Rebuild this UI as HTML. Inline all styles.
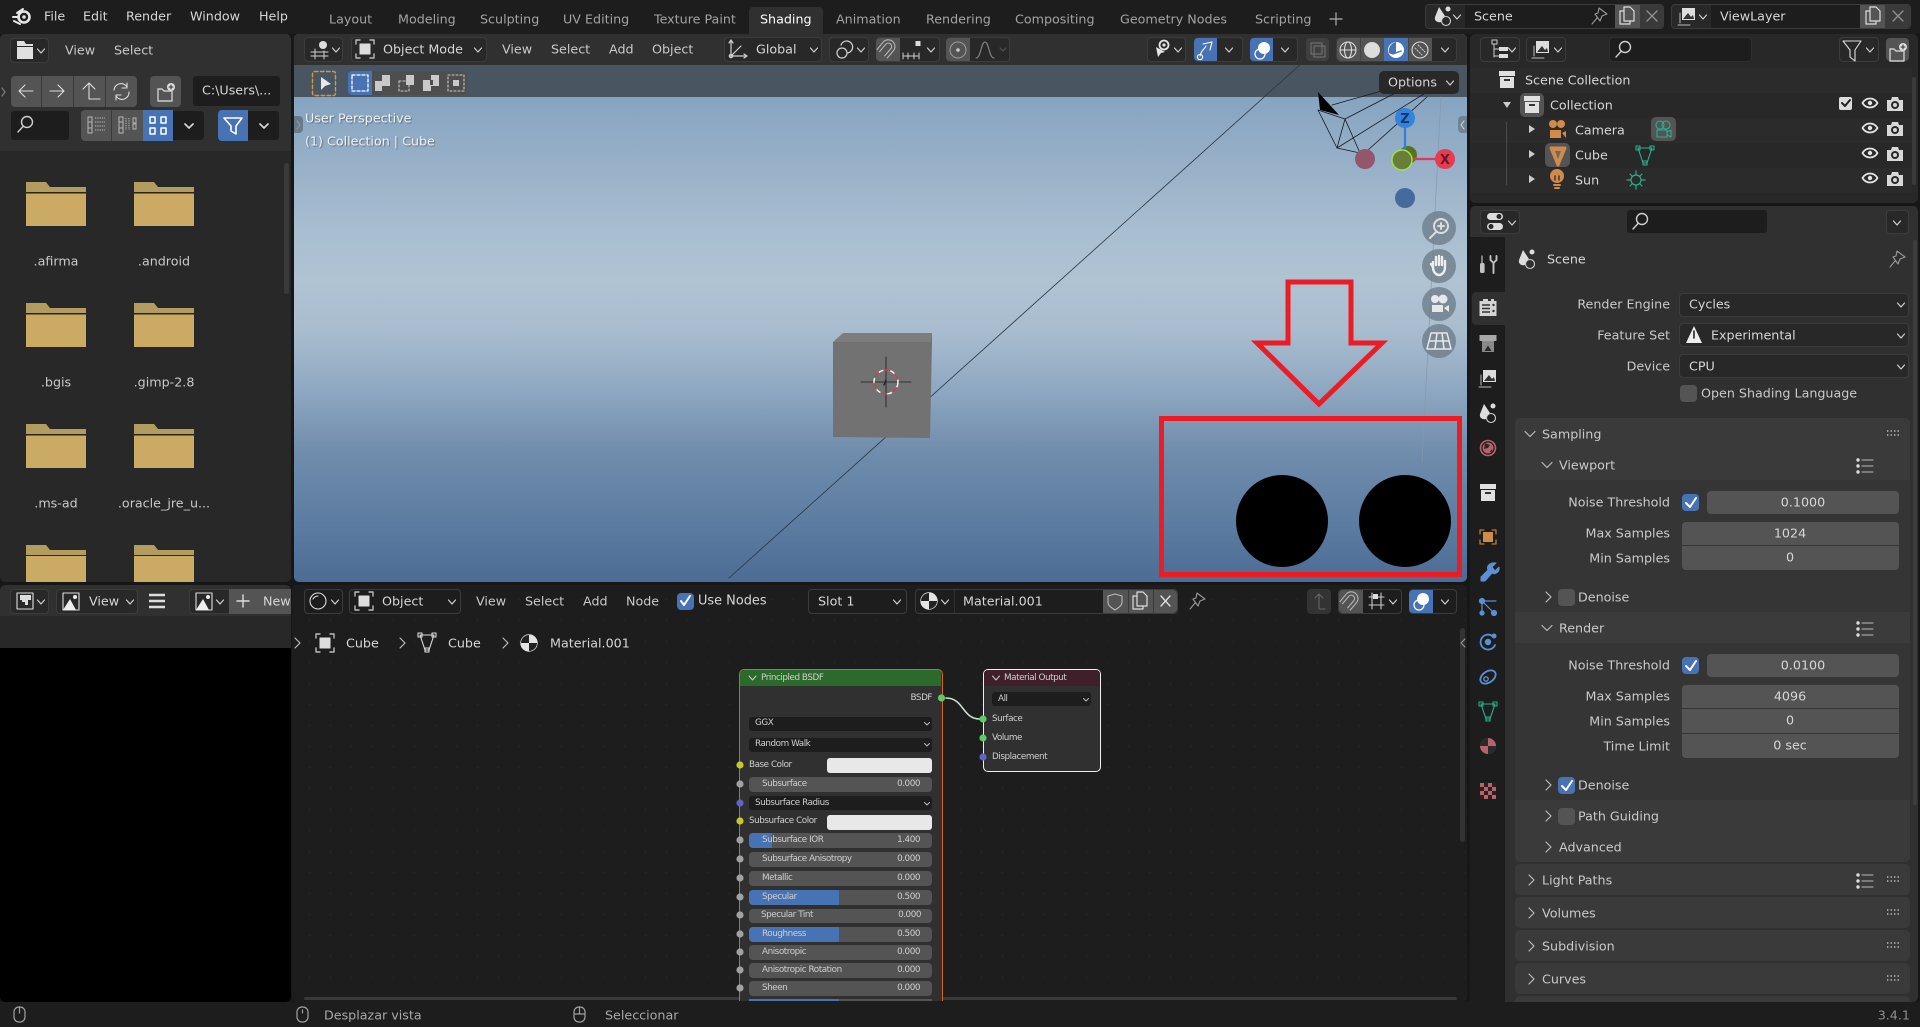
<!DOCTYPE html>
<html><head><meta charset="utf-8"><title>Blender</title>
<style>
html,body{margin:0;padding:0;width:1920px;height:1027px;overflow:hidden;background:#171717}
body{position:relative;font-family:"DejaVu Sans","Liberation Sans",sans-serif;font-size:12.7px;color:#d6d6d6}
div,span{position:absolute;box-sizing:border-box}
.t{transform:translateY(-50%);white-space:nowrap}
.r{transform:translate(-100%,-50%);white-space:nowrap}
.c{transform:translate(-50%,-50%);white-space:nowrap}
.p{border-radius:5px}
.d{background:#282828;border:1px solid #3c3c3c;border-radius:4px}
.k{background:#1d1d1d;border:1px solid #303030;border-radius:4px}
.f{background:#545454;border-radius:4px}
.b{background:#4772b3;border-radius:4px}
.n{font-size:8.8px;letter-spacing:-.45px;color:#cfcfcf}
.m{color:#a3a3a3}
.l{color:#c9c9c9}
svg.o{position:absolute;left:0;top:0;width:1920px;height:1027px;pointer-events:none}
</style></head><body>

<!-- panels -->
<div style="left:0;top:0;width:1920px;height:34px;background:#1d1d1d"></div>
<div style="left:749px;top:7px;width:74px;height:27px;background:#303030;border-radius:4px 4px 0 0"></div>
<div class="p" style="left:0;top:34px;width:291px;height:548px;background:#282828"></div>
<div class="p" style="left:0;top:34px;width:291px;height:117px;background:#303030;border-radius:5px 5px 0 0"></div>
<div style="left:284px;top:163px;width:5px;height:131px;background:#3a3a3a;border-radius:3px"></div>

<div class="p" style="left:294px;top:34px;width:1173px;height:548px;overflow:hidden;background:linear-gradient(180deg,#86a4c0 63px,#95aec7 120px,#a9bed0 200px,#afc3d3 245px,#a9bdcf 295px,#8fa8c2 355px,#6f8cac 420px,#5c7ca1 490px,#4d6c95 548px)">
<div style="left:0;top:0;width:1173px;height:31px;background:#303030"></div>
<div style="left:0;top:31px;width:1173px;height:32px;background:#4a5562"></div>
</div>

<div class="p" style="left:1470px;top:34px;width:448px;height:169px;background:#282828"></div>
<div style="left:1470px;top:68px;width:442px;height:25px;background:#2b2b2b"></div>
<div style="left:1470px;top:118px;width:442px;height:25px;background:#2b2b2b"></div>
<div style="left:1470px;top:168px;width:442px;height:25px;background:#2b2b2b"></div>
<div style="left:1912px;top:77px;width:4px;height:108px;background:#3a3a3a;border-radius:2px"></div>

<div class="p" style="left:1470px;top:206px;width:448px;height:796px;background:#303030"></div>
<div style="left:1470px;top:237px;width:35px;height:765px;background:#1d1d1d"></div>
<div style="left:1472px;top:292px;width:33px;height:33px;background:#303030;border-radius:4px 0 0 4px"></div>
<div style="left:1913px;top:240px;width:4px;height:565px;background:#3d3d3d;border-radius:2px"></div>

<div class="p" style="left:0;top:585px;width:291px;height:417px;background:#000;overflow:hidden">
<div style="left:0;top:0;width:291px;height:31px;background:#303030"></div>
<div style="left:0;top:31px;width:291px;height:32px;background:#282828"></div>
</div>

<div class="p" style="left:292px;top:585px;width:1175px;height:417px;background-color:#1d1d1d;background-image:radial-gradient(circle,#242424 1px,transparent 1.3px);background-size:21px 21px;background-position:7px 4px"></div>
<div style="left:1460px;top:628px;width:5px;height:214px;background:#333;border-radius:3px"></div>
<div style="left:304px;top:997px;width:1153px;height:3px;background:#3a3a3a;border-radius:2px"></div>

<div style="left:0;top:1002px;width:1920px;height:25px;background:#1d1d1d"></div>

<!-- top bar -->
<span class="t" style="left:44px;top:16px">File</span>
<span class="t" style="left:83px;top:16px">Edit</span>
<span class="t" style="left:126px;top:16px">Render</span>
<span class="t" style="left:190px;top:16px">Window</span>
<span class="t" style="left:259px;top:16px">Help</span>
<span class="t m" style="left:329px;top:19px">Layout</span>
<span class="t m" style="left:398px;top:19px">Modeling</span>
<span class="t m" style="left:480px;top:19px">Sculpting</span>
<span class="t m" style="left:563px;top:19px">UV Editing</span>
<span class="t m" style="left:654px;top:19px">Texture Paint</span>
<span class="t" style="left:760px;top:19px;color:#fff">Shading</span>
<span class="t m" style="left:836px;top:19px">Animation</span>
<span class="t m" style="left:926px;top:19px">Rendering</span>
<span class="t m" style="left:1015px;top:19px">Compositing</span>
<span class="t m" style="left:1120px;top:19px">Geometry Nodes</span>
<span class="t m" style="left:1255px;top:19px">Scripting</span>

<div class="d" style="left:1425px;top:4px;width:239px;height:25px"></div>
<div style="left:1465px;top:5px;width:150px;height:23px;background:#1d1d1d"></div>
<div style="left:1615px;top:5px;width:25px;height:23px;background:#545454"></div>
<div style="left:1640px;top:5px;width:23px;height:23px;background:#3a3a3a;border-radius:0 4px 4px 0"></div>
<span class="t" style="left:1474px;top:16px">Scene</span>
<div class="d" style="left:1671px;top:4px;width:240px;height:25px"></div>
<div style="left:1711px;top:5px;width:149px;height:23px;background:#1d1d1d"></div>
<div style="left:1860px;top:5px;width:25px;height:23px;background:#545454"></div>
<div style="left:1885px;top:5px;width:25px;height:23px;background:#3a3a3a;border-radius:0 4px 4px 0"></div>
<span class="t" style="left:1720px;top:16px">ViewLayer</span>

<!-- file browser -->
<div class="d" style="left:10px;top:38px;width:39px;height:25px"></div>
<span class="t l" style="left:65px;top:50px">View</span>
<span class="t l" style="left:114px;top:50px">Select</span>
<div class="f" style="left:11px;top:76px;width:126px;height:31px"></div>
<div style="left:41px;top:76px;width:1px;height:31px;background:#3a3a3a"></div>
<div style="left:73px;top:76px;width:1px;height:31px;background:#3a3a3a"></div>
<div style="left:105px;top:76px;width:1px;height:31px;background:#3a3a3a"></div>
<div class="f" style="left:150px;top:76px;width:31px;height:31px"></div>
<div class="k" style="left:192px;top:75px;width:89px;height:32px"></div>
<span class="t" style="left:202px;top:90px">C:\Users\...</span>
<div class="k" style="left:10px;top:110px;width:60px;height:31px"></div>
<div class="k" style="left:81px;top:110px;width:124px;height:31px"></div>
<div class="f" style="left:81px;top:110px;width:62px;height:31px;border-radius:4px 0 0 4px"></div>
<div style="left:111px;top:110px;width:1px;height:31px;background:#3a3a3a"></div>
<div class="b" style="left:143px;top:110px;width:30px;height:31px;border-radius:0"></div>
<div class="k" style="left:218px;top:110px;width:62px;height:31px"></div>
<div class="b" style="left:218px;top:110px;width:30px;height:31px;border-radius:4px 0 0 4px"></div>
<span class="c l" style="left:56px;top:261px">.afirma</span>
<span class="c l" style="left:164px;top:261px">.android</span>
<span class="c l" style="left:56px;top:382px">.bgis</span>
<span class="c l" style="left:164px;top:382px">.gimp-2.8</span>
<span class="c l" style="left:56px;top:503px">.ms-ad</span>
<span class="c l" style="left:164px;top:503px">.oracle_jre_u...</span>

<!-- 3d header -->
<div class="d" style="left:304px;top:37px;width:39px;height:25px"></div>
<div class="d" style="left:351px;top:37px;width:136px;height:25px"></div>
<span class="t" style="left:383px;top:49px">Object Mode</span>
<span class="t l" style="left:502px;top:49px">View</span>
<span class="t l" style="left:551px;top:49px">Select</span>
<span class="t l" style="left:609px;top:49px">Add</span>
<span class="t l" style="left:652px;top:49px">Object</span>
<div class="d" style="left:724px;top:37px;width:98px;height:25px"></div>
<span class="t" style="left:756px;top:49px">Global</span>
<div class="d" style="left:829px;top:37px;width:40px;height:25px"></div>
<div class="d" style="left:876px;top:37px;width:64px;height:25px"></div>
<div class="f" style="left:876px;top:38px;width:24px;height:23px;border-radius:4px 0 0 4px"></div>
<div class="d" style="left:946px;top:37px;width:64px;height:25px"></div>
<div class="f" style="left:946px;top:38px;width:24px;height:23px;border-radius:4px 0 0 4px"></div>
<div class="d" style="left:1147px;top:37px;width:39px;height:25px"></div>
<div class="d" style="left:1194px;top:37px;width:49px;height:25px"></div>
<div class="b" style="left:1194px;top:38px;width:23px;height:23px;border-radius:4px 0 0 4px"></div>
<div class="d" style="left:1250px;top:37px;width:48px;height:25px"></div>
<div class="b" style="left:1250px;top:38px;width:23px;height:23px;border-radius:4px 0 0 4px"></div>
<div class="f" style="left:1306px;top:38px;width:23px;height:23px;background:#3f3f3f"></div>
<div class="d" style="left:1336px;top:37px;width:121px;height:25px"></div>
<div class="f" style="left:1337px;top:38px;width:95px;height:23px;border-radius:4px 0 0 4px"></div>
<div class="b" style="left:1384px;top:38px;width:24px;height:23px;border-radius:0"></div>
<div style="left:1360px;top:38px;width:1px;height:23px;background:#454545"></div>
<div style="left:1408px;top:38px;width:1px;height:23px;background:#454545"></div>

<!-- tool header -->
<div class="f" style="left:348px;top:71px;width:119px;height:24px;background:#4e4e4e"></div>
<div class="b" style="left:348px;top:71px;width:24px;height:24px;border-radius:4px 0 0 4px"></div>
<span class="t" style="left:305px;top:118px;color:#f0f0f0;text-shadow:1px 1px 1px rgba(0,0,0,.35)">User Perspective</span>
<span class="t" style="left:305px;top:141px;color:#f0f0f0;text-shadow:1px 1px 1px rgba(0,0,0,.35)">(1) Collection | Cube</span>
<div style="left:294px;top:116px;width:9px;height:17px;background:rgba(80,90,100,.6);border-radius:0 4px 4px 0"></div>
<div style="left:1458px;top:116px;width:9px;height:17px;background:rgba(100,115,130,.7);border-radius:4px 0 0 4px"></div>

<!-- image editor -->
<div class="d" style="left:10px;top:589px;width:39px;height:25px"></div>
<div class="d" style="left:56px;top:589px;width:82px;height:25px"></div>
<span class="t" style="left:89px;top:601px">View</span>
<div class="d" style="left:189px;top:589px;width:102px;height:25px;border-radius:4px 0 0 4px"></div>
<div style="left:229px;top:589px;width:62px;height:25px;background:#545454"></div>
<span class="t" style="left:263px;top:601px">New</span>

<!-- node header -->
<div class="d" style="left:304px;top:589px;width:39px;height:25px;background:#1d1d1d"></div>
<div class="d" style="left:349px;top:589px;width:112px;height:25px;background:#1d1d1d"></div>
<span class="t" style="left:382px;top:601px">Object</span>
<span class="t l" style="left:476px;top:601px">View</span>
<span class="t l" style="left:525px;top:601px">Select</span>
<span class="t l" style="left:583px;top:601px">Add</span>
<span class="t l" style="left:626px;top:601px">Node</span>
<div class="b" style="left:677px;top:593px;width:17px;height:17px"></div>
<span class="t" style="left:698px;top:601px;font-size:12.9px">Use Nodes</span>
<div class="d" style="left:808px;top:589px;width:99px;height:25px;background:#1d1d1d"></div>
<span class="t" style="left:818px;top:601px">Slot 1</span>
<div class="d" style="left:915px;top:589px;width:263px;height:25px;background:#1d1d1d"></div>
<div style="left:954px;top:590px;width:1px;height:23px;background:#303030"></div>
<span class="t" style="left:963px;top:601px">Material.001</span>
<div style="left:1103px;top:590px;width:74px;height:23px;background:#545454;border-radius:0 4px 4px 0"></div>
<div style="left:1128px;top:590px;width:1px;height:23px;background:#3a3a3a"></div>
<div style="left:1153px;top:590px;width:1px;height:23px;background:#3a3a3a"></div>
<div class="f" style="left:1307px;top:589px;width:24px;height:25px;background:#333"></div>
<div class="d" style="left:1338px;top:589px;width:64px;height:25px;background:#1d1d1d"></div>
<div class="f" style="left:1339px;top:590px;width:24px;height:23px;border-radius:4px 0 0 4px"></div>
<div class="d" style="left:1409px;top:589px;width:48px;height:25px;background:#1d1d1d"></div>
<div class="b" style="left:1409px;top:590px;width:24px;height:23px;border-radius:4px 0 0 4px"></div>
<span class="t" style="left:346px;top:643px">Cube</span>
<span class="t" style="left:448px;top:643px">Cube</span>
<span class="t" style="left:550px;top:643px">Material.001</span>

<!-- Principled node -->
<div style="left:739px;top:669px;width:204px;height:332px;background:#303030;border:1.5px solid #d2661f;border-bottom:0;border-radius:5px 5px 0 0;overflow:hidden">
<div style="left:0;top:0;width:201px;height:16px;background:#2c6a2c"></div>
</div>
<span class="t n" style="left:761px;top:678px">Principled BSDF</span>
<span class="r n" style="left:932px;top:698px">BSDF</span>
<div class="k" style="left:748px;top:716px;width:185px;height:16px"></div><span class="t n" style="left:755px;top:723px">GGX</span>
<div class="k" style="left:748px;top:737px;width:185px;height:16px"></div><span class="t n" style="left:755px;top:744px">Random Walk</span>
<span class="t n" style="left:749px;top:765px">Base Color</span>
<div style="left:827px;top:758px;width:105px;height:15px;background:#e8e8e8;border-radius:3px"></div>
<div class="f" style="left:749px;top:777px;width:183px;height:15px"></div><span class="t n" style="left:762px;top:784px">Subsurface</span><span class="r n" style="left:920px;top:784px">0.000</span>
<div class="k" style="left:748px;top:795px;width:185px;height:16px"></div><span class="t n" style="left:755px;top:803px">Subsurface Radius</span>
<span class="t n" style="left:749px;top:821px">Subsurface Color</span>
<div style="left:827px;top:815px;width:105px;height:15px;background:#e8e8e8;border-radius:3px"></div>
<div class="f" style="left:749px;top:833px;width:183px;height:15px"></div><div class="b" style="left:749px;top:833px;width:23px;height:15px;border-radius:4px 0 0 4px"></div><span class="t n" style="left:762px;top:840px">Subsurface IOR</span><span class="r n" style="left:920px;top:840px">1.400</span>
<div class="f" style="left:749px;top:852px;width:183px;height:15px"></div><span class="t n" style="left:762px;top:859px">Subsurface Anisotropy</span><span class="r n" style="left:920px;top:859px">0.000</span>
<div class="f" style="left:749px;top:871px;width:183px;height:15px"></div><span class="t n" style="left:762px;top:878px">Metallic</span><span class="r n" style="left:920px;top:878px">0.000</span>
<div class="f" style="left:749px;top:890px;width:183px;height:15px"></div><div class="b" style="left:749px;top:890px;width:90px;height:15px;border-radius:4px 0 0 4px"></div><span class="t n" style="left:762px;top:897px">Specular</span><span class="r n" style="left:920px;top:897px">0.500</span>
<div class="f" style="left:749px;top:909px;width:183px;height:14px"></div><span class="t n" style="left:761px;top:915px">Specular Tint</span><span class="r n" style="left:921px;top:915px">0.000</span>
<div class="f" style="left:749px;top:927px;width:183px;height:15px"></div><div class="b" style="left:749px;top:927px;width:90px;height:15px;border-radius:4px 0 0 4px"></div><span class="t n" style="left:762px;top:934px">Roughness</span><span class="r n" style="left:920px;top:934px">0.500</span>
<div class="f" style="left:749px;top:945px;width:183px;height:15px"></div><span class="t n" style="left:762px;top:952px">Anisotropic</span><span class="r n" style="left:920px;top:952px">0.000</span>
<div class="f" style="left:749px;top:963px;width:183px;height:15px"></div><span class="t n" style="left:762px;top:970px">Anisotropic Rotation</span><span class="r n" style="left:920px;top:970px">0.000</span>
<div class="f" style="left:749px;top:981px;width:183px;height:15px"></div><span class="t n" style="left:762px;top:988px">Sheen</span><span class="r n" style="left:920px;top:988px">0.000</span>
<div class="f" style="left:749px;top:999px;width:183px;height:2px;border-radius:0"></div><div class="b" style="left:749px;top:999px;width:90px;height:2px;border-radius:0"></div>

<!-- Material output -->
<div style="left:983px;top:669px;width:118px;height:103px;background:#303030;border:1.5px solid #eee;border-radius:5px;overflow:hidden">
<div style="left:0;top:0;width:116px;height:16px;background:#3f1f2a"></div>
</div>
<span class="t n" style="left:1004px;top:678px">Material Output</span>
<div class="k" style="left:991px;top:691px;width:101px;height:16px"></div><span class="t n" style="left:998px;top:699px">All</span>
<span class="t n" style="left:992px;top:719px">Surface</span>
<span class="t n" style="left:992px;top:738px">Volume</span>
<span class="t n" style="left:992px;top:757px">Displacement</span>

<!-- outliner -->
<div class="d" style="left:1480px;top:37px;width:40px;height:25px;background:#282828"></div>
<div class="d" style="left:1526px;top:37px;width:40px;height:25px;background:#282828"></div>
<div class="k" style="left:1609px;top:37px;width:143px;height:25px"></div>
<div class="d" style="left:1839px;top:37px;width:40px;height:25px;background:#282828"></div>
<div class="f" style="left:1886px;top:38px;width:23px;height:23px"></div>
<span class="t" style="left:1525px;top:80px">Scene Collection</span>
<div style="left:1520px;top:93px;width:24px;height:24px;background:#545454;border-radius:5px"></div>
<span class="t" style="left:1550px;top:105px">Collection</span>
<span class="t" style="left:1575px;top:130px">Camera</span>
<div style="left:1651px;top:117px;width:25px;height:24px;background:#545454;border-radius:5px"></div>
<div style="left:1545px;top:143px;width:25px;height:24px;background:#545454;border-radius:5px"></div>
<span class="t" style="left:1575px;top:155px">Cube</span>
<span class="t" style="left:1575px;top:180px">Sun</span>
<div style="left:1506px;top:122px;width:1px;height:63px;background:#4a4a4a"></div>

<!-- props header -->
<div class="d" style="left:1480px;top:210px;width:40px;height:24px"></div>
<div class="k" style="left:1626px;top:209px;width:142px;height:25px"></div>
<div class="d" style="left:1886px;top:210px;width:23px;height:24px"></div>
<span class="t" style="left:1547px;top:259px">Scene</span>
<span class="r l" style="left:1670px;top:304px">Render Engine</span>
<div class="d" style="left:1679px;top:293px;width:230px;height:24px"></div><span class="t" style="left:1689px;top:304px">Cycles</span>
<span class="r l" style="left:1670px;top:335px">Feature Set</span>
<div class="d" style="left:1679px;top:323px;width:230px;height:24px"></div><span class="t" style="left:1711px;top:335px">Experimental</span>
<span class="r l" style="left:1670px;top:366px">Device</span>
<div class="d" style="left:1679px;top:354px;width:230px;height:24px"></div><span class="t" style="left:1689px;top:366px">CPU</span>
<div class="f" style="left:1680px;top:385px;width:17px;height:17px"></div><span class="t l" style="left:1701px;top:393px">Open Shading Language</span>

<!-- sampling panel -->
<div class="p" style="left:1515px;top:418px;width:395px;height:444px;background:#3a3a3a"></div>
<div style="left:1515px;top:480px;width:395px;height:132px;background:#353535"></div>
<div style="left:1515px;top:612px;width:395px;height:31px;background:#3b3b3b"></div>
<div style="left:1515px;top:643px;width:395px;height:157px;background:#353535"></div>
<span class="t l" style="left:1542px;top:434px">Sampling</span>
<span class="t l" style="left:1559px;top:465px">Viewport</span>
<span class="r l" style="left:1670px;top:502px">Noise Threshold</span>
<div class="b" style="left:1682px;top:494px;width:17px;height:17px"></div>
<div class="f" style="left:1707px;top:491px;width:192px;height:23px"></div><span class="c" style="left:1803px;top:502px">0.1000</span>
<span class="r l" style="left:1670px;top:533px">Max Samples</span>
<div class="f" style="left:1682px;top:522px;width:217px;height:23px;border-radius:4px 4px 0 0"></div><span class="c" style="left:1790px;top:533px">1024</span>
<span class="r l" style="left:1670px;top:558px">Min Samples</span>
<div class="f" style="left:1682px;top:546px;width:217px;height:24px;border-radius:0 0 4px 4px"></div><span class="c" style="left:1790px;top:557px">0</span>
<div class="f" style="left:1558px;top:589px;width:17px;height:17px"></div><span class="t l" style="left:1578px;top:597px">Denoise</span>
<span class="t l" style="left:1559px;top:628px">Render</span>
<span class="r l" style="left:1670px;top:665px">Noise Threshold</span>
<div class="b" style="left:1682px;top:657px;width:17px;height:17px"></div>
<div class="f" style="left:1707px;top:654px;width:192px;height:23px"></div><span class="c" style="left:1803px;top:665px">0.0100</span>
<span class="r l" style="left:1670px;top:696px">Max Samples</span>
<div class="f" style="left:1682px;top:685px;width:217px;height:23px;border-radius:4px 4px 0 0"></div><span class="c" style="left:1790px;top:696px">4096</span>
<span class="r l" style="left:1670px;top:721px">Min Samples</span>
<div class="f" style="left:1682px;top:709px;width:217px;height:24px;border-radius:0"></div><span class="c" style="left:1790px;top:720px">0</span>
<span class="r l" style="left:1670px;top:746px">Time Limit</span>
<div class="f" style="left:1682px;top:734px;width:217px;height:24px;border-radius:0 0 4px 4px"></div><span class="c" style="left:1790px;top:745px">0 sec</span>
<div class="b" style="left:1558px;top:777px;width:17px;height:17px"></div><span class="t l" style="left:1578px;top:785px">Denoise</span>
<div class="f" style="left:1558px;top:808px;width:17px;height:17px"></div><span class="t l" style="left:1578px;top:816px">Path Guiding</span>
<span class="t l" style="left:1559px;top:847px">Advanced</span>
<div class="p" style="left:1515px;top:864px;width:395px;height:31px;background:#3a3a3a"></div><span class="t l" style="left:1542px;top:880px">Light Paths</span>
<div class="p" style="left:1515px;top:897px;width:395px;height:31px;background:#3a3a3a"></div><span class="t l" style="left:1542px;top:913px">Volumes</span>
<div class="p" style="left:1515px;top:930px;width:395px;height:31px;background:#3a3a3a"></div><span class="t l" style="left:1542px;top:946px">Subdivision</span>
<div class="p" style="left:1515px;top:963px;width:395px;height:31px;background:#3a3a3a"></div><span class="t l" style="left:1542px;top:979px">Curves</span>
<div style="left:1515px;top:996px;width:395px;height:6px;background:#3a3a3a;border-radius:5px 5px 0 0"></div>

<!-- status -->
<span class="t" style="left:324px;top:1015px;color:#a8a8a8">Desplazar vista</span>
<span class="t" style="left:605px;top:1015px;color:#a8a8a8">Seleccionar</span>
<span class="r" style="left:1910px;top:1015px;color:#8f8f8f">3.4.1</span>

<svg class="o" viewBox="0 0 1920 1027" fill="none" stroke="#d0d0d0" stroke-width="1.4" stroke-linecap="round" stroke-linejoin="round">
<defs>
<path id="c" d="M-3.5-2L0 2L3.5-2" stroke-width="1.2"/>
<path id="c2" d="M-2.5-1.5L0 1L2.5-1.5" stroke-width="1" stroke="#bbb"/>
<path id="cr" d="M-2-5L3 0L-2 5" stroke="#bbb" stroke-width="1.2"/>
<path id="cd" d="M-5-2.5L0 2.5L5-2.5" stroke="#bbb" stroke-width="1.2"/>
<path id="gr" d="M-7-2H7M-7 2H7" stroke="#bbb" stroke-width="1.5" stroke-dasharray="1.4 2.1" stroke-linecap="butt"/>
<g id="li"><circle cx="-7" cy="-6" r="1.7" fill="#ddd" stroke="none"/><circle cx="-7" cy="0" r="1.7" fill="#ddd" stroke="none"/><circle cx="-7" cy="6" r="1.7" fill="#ddd" stroke="none"/><path d="M-3-6H8M-3 0H8M-3 6H8" stroke="#bbb" stroke-width="1"/></g>
<g id="se"><circle cx="2" cy="-3" r="5.5"/><path d="M-2 1.5L-7 7"/></g>
<g id="eye"><path d="M-7.5 0C-4-6 4-6 7.5 0C4 6-4 6-7.5 0Z" stroke-width="1.8" stroke="#e4e4e4"/><circle r="2.2" fill="#e4e4e4" stroke="none"/></g>
<g id="cam"><path d="M-8-4H-4L-3-7H3L4-4H8V7H-8Z" fill="#d8d8d8" stroke="none"/><circle cy="1" r="4" fill="#282828" stroke="none"/><circle cy="1" r="2" fill="#d8d8d8" stroke="none"/></g>
<g id="mo"><path d="M-9-5V-9H-5M5-9H9V-5M9 5V9H5M-5 9H-9V5" stroke="#bbb"/><rect x="-5.5" y="-5.5" width="11" height="11" fill="#ddd" stroke="none"/></g>
<g id="ed3"><circle cx="3" cy="-4" r="4" fill="#ddd" stroke="none"/><path d="M-9 3H8M-9 7H8M-5 0V10M4 2V10" stroke-width="1"/></g>
<g id="gl"><path d="M-7-9V7H9M-7 7L3-3M-9-6L-7-9L-5-6M6 5L9 7L6 9" stroke-width="1.2"/><circle cx="-7" cy="7" r="1.6"/></g>
<g id="pv"><circle cx="-3" cy="4" r="5" stroke-width="1.2"/><path d="M-4-4A6 6 0 1 1 2 4" stroke-width="1.2"/></g>
<g id="mg" transform="rotate(0)"><g transform="rotate(40)"><path d="M-5 8V-2A5 5 0 0 1 5-2V8" stroke="#b5b5b5" stroke-width="4.4" stroke-linecap="butt"/><path d="M-5 8V-2A5 5 0 0 1 5-2V8" stroke="#545454" stroke-width="2.2" stroke-linecap="butt"/></g></g>
<g id="inc"><path d="M-8 6H8M-8 3V9M-3 3V9M3 3V9M8 3V9" stroke-width="1"/><rect x="4.5" y="-9" width="5" height="5" fill="#ddd" stroke="none"/></g>
<g id="fo"><path d="M0 0H20L24 5H60V10H0Z" fill="#b39c5f" stroke="none"/><path d="M0 10H60V11.5H0Z" fill="#2a2416" stroke="none"/><path d="M0 11.5H60V44H0Z" fill="#cbaa63" stroke="none"/></g>
<g id="fed"><path d="M-8-9H-1L1-6H8V-4H-8ZM-8-3H8V9H-8Z" fill="#e0e0e0" stroke="none"/></g>
<g id="nf"><path d="M-7-3H-3L-1-1H7V9H-7Z" stroke="#ccc"/><circle cx="6" cy="-5" r="4" fill="#ddd" stroke="none"/><path d="M4-5H8M6-7V-3" stroke="#333" stroke-width="1.1"/></g>
<g id="vl"><path d="M-7 7V-3M-9 9H3" stroke="#bbb" stroke-width="1"/><path d="M-5-8H8V4H-5Z" fill="#ddd" stroke="none"/><path d="M-4 3L1-3L4 1L6-1L7 3Z" fill="#333" stroke="none"/></g>
<g id="sc"><path d="M-4-9L-8 1C-9 5-5 7-2 6C-2 3 0 1 2 0Z" fill="#ddd" stroke="none"/><circle cx="5" cy="-7" r="2.5" fill="#ddd" stroke="none"/><circle cx="3" cy="5" r="4.5" stroke-width="1.1"/></g>
<g id="pin"><path d="M-1-8L7-2L2 0L0 5L-5-2L-2-3Z M-3 2L-8 8" stroke="#999" stroke-width="1.1"/></g>
<g id="cp"><path d="M-7-5H-3M-7-5V8H3V5" stroke="#ddd" stroke-width="1.2"/><path d="M-3-9H3L7-5V5H-3Z" stroke="#ddd" stroke-width="1.2"/></g>
<g id="x"><path d="M-5-5L5 5M5-5L-5 5" stroke="#8f8f8f"/></g>
<g id="box"><rect x="-8" y="-9" width="16" height="5" fill="#e0e0e0" stroke="none"/><path d="M-7-3H7V8H-7Z" fill="#e0e0e0" stroke="none"/><rect x="-3" y="-1" width="6" height="2" fill="#333" stroke="none"/></g>
<g id="mat"><circle r="8" fill="#e4e4e4" stroke="#e4e4e4"/><path d="M0-8A8 8 0 0 0-8 0H0ZM0 0V8A8 8 0 0 0 8 0Z" fill="#222" stroke="none"/></g>
<g id="mesh"><path d="M-7-7H7L2 8H-2Z" stroke="#ddd" stroke-width="1.1"/><rect x="-9" y="-9" width="4" height="4" stroke="#ddd" stroke-width="1.1"/><rect x="5" y="-9" width="4" height="4" stroke="#ddd" stroke-width="1.1"/><rect x="-2" y="6" width="4" height="4" stroke="#ddd" stroke-width="1.1"/></g>
<g id="meshg"><path d="M-7-7H7L2 8H-2Z" stroke="#2bb08c" stroke-width="1.1"/><rect x="-9" y="-9" width="4" height="4" stroke="#2bb08c" stroke-width="1.1"/><rect x="5" y="-9" width="4" height="4" stroke="#2bb08c" stroke-width="1.1"/><rect x="-2" y="6" width="4" height="4" stroke="#2bb08c" stroke-width="1.1"/></g>
<g id="mcam"><circle cx="-3" cy="-5" r="4" /><circle cx="3" cy="-5" r="4"/><path d="M-6 0H4V7H-6ZM4 2L8 0V7L4 5"/></g>
<g id="hand"><path d="M-6 2V-3M-3 0V-8M0 0V-9M3 0V-8M6 2V-4M-6 2L-8-1M-6 2C-6 8-2 10 0 10S6 8 6 2" stroke="#eee" stroke-width="2.4"/></g>
</defs>

<!-- logo -->
<g transform="translate(22,17)"><circle cx="2" cy="0" r="5.5" stroke="#e6e6e6" stroke-width="2.6"/><circle cx="2" cy="0" r="1.8" fill="#e6e6e6" stroke="none"/><path d="M-9 0H-3M-5-4L1-8M-8 4L-2 7" stroke="#e6e6e6" stroke-width="2"/></g>

<!-- tab + -->
<path d="M1330 19H1342M1336 13V25" stroke="#999"/>

<!-- scene selector -->
<use href="#sc" x="1443" y="16"/><use href="#c" x="1457" y="17"/>
<use href="#pin" x="1600" y="16"/><use href="#cp" x="1627" y="16"/><use href="#x" x="1652" y="16"/>
<use href="#vl" x="1687" y="16"/><use href="#c" x="1703" y="17"/>
<use href="#cp" x="1873" y="16"/><use href="#x" x="1898" y="16"/>

<!-- file browser icons -->
<use href="#fed" x="25" y="50"/><use href="#c" x="41" y="51"/>
<path d="M19 91H33M19 91L25 85M19 91L25 97M50 91H64M64 91L58 85M64 91L58 97M89 83V99H100M89 83L83 89M89 83L95 89" stroke="#ddd" stroke-width="1.1"/>
<path d="M114 90A7 7 0 0 1 127 87M129 92A7 7 0 0 1 116 96M127 83V88H122M116 100V95H121" stroke="#ddd" stroke-width="1.1"/>
<use href="#nf" x="165" y="92"/>
<use href="#se" x="25" y="125"/>
<g stroke="#a8a8a8" stroke-width="1.2" stroke-linecap="butt"><path d="M88 117H92V133H88ZM88 122H92M88 128H92"/><path d="M95 118H105M95 122H105M95 126H105M95 130H105" stroke-dasharray="1.3 1"/>
<path d="M119 117H123V133H119ZM119 122H123M119 128H123"/><path d="M126 118V130M129 118V130" stroke-dasharray="1.3 1"/><path d="M133 118H136V123H133ZM133 124H136V129H133Z"/></g>
<path d="M150 117H155V123H150ZM161 117H166V123H161ZM150 128H155V134H150ZM161 128H166V134H161Z" stroke="#fff" stroke-width="1.5"/>
<path d="M185 124L189 128L193 124" stroke="#ddd" stroke-width="1.6"/>
<path d="M224 118H242L236 126V134L231 131V126Z" stroke="#fff" stroke-width="1.6"/>
<path d="M260 124L264 128L268 124" stroke="#ddd" stroke-width="1.6"/>
<path d="M2 88L5 92L2 96" stroke="#777"/>
<use href="#fo" x="26" y="182"/><use href="#fo" x="134" y="182"/>
<use href="#fo" x="26" y="303"/><use href="#fo" x="134" y="303"/>
<use href="#fo" x="26" y="424"/><use href="#fo" x="134" y="424"/>
<g><path d="M26 545H46L50 550H86V555H26Z" fill="#b39c5f" stroke="none"/><path d="M26 556H86V582H26Z" fill="#cbaa63" stroke="none"/><path d="M134 545H154L158 550H194V555H134Z" fill="#b39c5f" stroke="none"/><path d="M134 556H194V582H134Z" fill="#cbaa63" stroke="none"/></g>

<!-- viewport 3D content -->
<path d="M1302 63L729 578" stroke="#2a3644" stroke-width=".8"/>
<path d="M1441 97L1422 462" stroke="#8299af" stroke-width=".7"/>
<path d="M833 342L843 333H932L930 342Z" fill="#7d7d7d" stroke="none"/>
<path d="M833 342H930L932 333V342L930 438L833 437Z" fill="#727272" stroke="none"/>
<path d="M886 357V407M861 382H911" stroke="#333" stroke-width="1.1"/>
<circle cx="886" cy="382" r="12" stroke="#fff" stroke-width="1.4" stroke-dasharray="6 6"/>
<circle cx="886" cy="382" r="12" stroke="#b9475a" stroke-width="1.4" stroke-dasharray="6 6" stroke-dashoffset="6"/>
<path d="M886 380L884 385" stroke="#222"/>
<!-- camera -->
<g stroke="#161a20" stroke-width=".8" fill="none"><path d="M1318 110L1345 119L1337 148L1318 110ZM1345 119L1360 153L1337 148M1345 119L1405 88M1337 148L1427 92M1368 150L1427 97M1332 105L1385 90"/></g>
<path d="M1318 92L1320 110L1339 115Z" fill="#000" stroke="none"/>
<!-- gizmo -->
<circle cx="1408" cy="155" r="9" fill="#55741f" stroke="none"/>
<path d="M1405 118V150" stroke="#2f80d8" stroke-width="2.2"/>
<path d="M1410 159H1445" stroke="#e8364f" stroke-width="2.2"/>
<circle cx="1365" cy="159" r="10" fill="#93566a" stroke="none"/>
<circle cx="1405" cy="198" r="10" fill="#466a9e" stroke="none"/>
<circle cx="1405" cy="118" r="10" fill="#3382dc" stroke="none"/>
<circle cx="1445" cy="159" r="10" fill="#e73b52" stroke="none"/>
<circle cx="1402" cy="160" r="10" fill="#677f38" stroke="#a4e04c" stroke-width="1.4"/>
<text x="1405" y="123" font-family="DejaVu Sans,sans-serif" font-size="13" font-weight="bold" fill="#123a6b" stroke="none" text-anchor="middle">Z</text>
<text x="1445" y="164" font-family="DejaVu Sans,sans-serif" font-size="13" font-weight="bold" fill="#6b1423" stroke="none" text-anchor="middle">X</text>
<!-- nav -->
<g fill="#6f7d8a" stroke="none" fill-opacity=".8"><circle cx="1439" cy="228" r="17"/><circle cx="1439" cy="266" r="17"/><circle cx="1439" cy="304" r="17"/><circle cx="1439" cy="341" r="17"/></g>
<circle cx="1441" cy="226" r="7" stroke="#ddd" stroke-width="2"/><path d="M1436 232L1430 238M1441 223V229M1438 226H1444" stroke="#ddd" stroke-width="2"/>
<use href="#hand" x="1439" y="265"/>
<g transform="translate(1439,305)"><circle cx="-4" cy="-6" r="4" fill="#e8e8e8" stroke="none"/><circle cx="4" cy="-6" r="4.5" fill="#e8e8e8" stroke="none"/><path d="M-7 0H4V7H-7ZM5 3L10 0V7Z" fill="#e8e8e8" stroke="none"/></g>
<path d="M1431 333H1447L1451 349H1427ZM1429 341H1449M1437 333L1435 349M1442 333L1444 349" stroke="#e8e8e8" stroke-width="1.5"/>
<!-- tool header icons -->
<rect x="312.5" y="71.5" width="23" height="24" rx="2" stroke="#cf9a45" stroke-dasharray="3.5 2.5" stroke-width="1.4"/>
<path d="M321 77V90L325 86L331 84Z" fill="#e8e8e8" stroke="none"/>
<rect x="352" y="75" width="16" height="16" stroke="#fff" stroke-dasharray="3 2" stroke-width="1.3"/>
<path d="M375 81H382V75H390V86H382V91H375Z" fill="#c9c9c9" stroke="none"/>
<path d="M406 75H414V85H406Z" fill="#c9c9c9" stroke="none"/><path d="M399 81H406M399 81V91H409V85" stroke="#c9c9c9" stroke-dasharray="2 2" stroke-width="1.1"/>
<path d="M423 80H431V75H439V86H431V91H423Z" fill="#c9c9c9" stroke="none"/><rect x="430" y="80" width="3" height="5" fill="#4e4e4e" stroke="none"/>
<rect x="448" y="75" width="16" height="16" stroke="#c9c9c9" stroke-dasharray="2 2" stroke-width="1.1"/><rect x="453" y="80" width="6" height="6" fill="#c9c9c9" stroke="none"/>

<!-- 3d header icons -->
<use href="#ed3" x="320" y="49"/><use href="#c" x="336" y="50"/>
<use href="#mo" x="365" y="49"/><use href="#c" x="478" y="50"/>
<use href="#gl" x="738" y="49"/><use href="#c" x="814" y="50"/>
<use href="#pv" x="845" y="49"/><use href="#c" x="861" y="50"/>
<use href="#mg" x="887" y="48"/><use href="#inc" x="911" y="50"/><use href="#c" x="931" y="50"/>
<circle cx="958" cy="50" r="8" stroke="#999" stroke-width="1.1"/><circle cx="958" cy="50" r="1.8" fill="#ccc" stroke="none"/>
<path d="M976 58C981 58 981 42 985 42S989 58 994 58" stroke="#888" stroke-width="1.1"/><path d="M1000 48L1003 51L1006 48" stroke="#555" stroke-width="1.1"/>
<g transform="translate(1162,49)"><circle cx="2" cy="-4" r="4.5" stroke="#e6e6e6" stroke-width="1.8"/><circle cx="2" cy="-4" r="1.6" fill="#e6e6e6" stroke="none"/><path d="M-6-2L-4 8L-1 4L3 3Z" fill="#e6e6e6" stroke="none"/></g>
<use href="#c" x="1178" y="50"/>
<path d="M1200 56C1201 50 1205 49 1206 46M1203 44L1212 42L1210 50" stroke="#fff" stroke-width="1.1"/><circle cx="1200" cy="57" r="2.6" stroke="#fff" stroke-width="1.1"/>
<use href="#c" x="1229" y="50"/>
<g transform="translate(1262,50)"><circle cx="-2" cy="4" r="5" stroke="#fff" stroke-width="1.2"/><circle cx="2" cy="-2" r="6" fill="#fff" stroke="none"/></g><use href="#c" x="1285" y="50"/>
<rect x="1311" y="43" width="11" height="11" stroke="#777" stroke-width="1"/><rect x="1314" y="46" width="11" height="11" stroke="#777" stroke-width="1"/>
<g transform="translate(1348,50)"><circle r="8" stroke="#ddd" stroke-width="1.1"/><ellipse rx="3.5" ry="8" stroke="#ddd" stroke-width="1.1"/><path d="M-8 0H8" stroke="#ddd" stroke-width="1.1"/></g>
<circle cx="1372" cy="50" r="8" fill="#ddd" stroke="none"/>
<g transform="translate(1396,50)"><circle r="8" fill="#fff" stroke="none"/><path d="M0-8V3A6 6 0 0 1-7 3A9 9 0 0 1 0-8" fill="#4772b3" stroke="none"/><path d="M-3 4L5 1" stroke="#4772b3"/></g>
<g transform="translate(1420,50)"><circle r="8" stroke="#ddd" stroke-width="1.1"/><path d="M-2-5L5 2M-5-2L2 5" stroke="#bbb" stroke-dasharray="1.5 1.5" stroke-width="1.1"/></g>
<use href="#c" x="1445" y="50"/>

<!-- handles -->
<path d="M297 121L300 125L297 129" stroke="#8a95a0" stroke-width="1.1"/>
<path d="M1464 121L1461 125L1464 129" stroke="#c8d0d8" stroke-width="1.1"/>

<!-- image editor icons -->
<g transform="translate(25,601)"><rect x="-8" y="-8" width="16" height="16" stroke="#ddd" stroke-width="1.1"/><path d="M-5-6H6V-1H3V4H0V1H-3V-1H-5Z" fill="#ddd" stroke="none"/></g><use href="#c" x="41" y="602"/>
<g transform="translate(71,601)"><rect x="-8" y="-8" width="16" height="17" stroke="#ddd" stroke-width="1.1"/><path d="M-8 9L-1-2L5 9Z" fill="#eee" stroke="none"/><circle cx="4" cy="-4" r="2" fill="#eee" stroke="none"/></g><use href="#c" x="130" y="602"/>
<path d="M149 595H165M149 601H165M149 607H165" stroke="#ddd" stroke-width="2.6" stroke-linecap="butt"/>
<g transform="translate(204,601)"><rect x="-8" y="-8" width="16" height="17" stroke="#ddd" stroke-width="1.1"/><path d="M-8 9L-1-2L5 9Z" fill="#eee" stroke="none"/><circle cx="4" cy="-4" r="2" fill="#eee" stroke="none"/></g><use href="#c" x="220" y="602"/>
<path d="M237 601H249M243 595V607" stroke="#ddd"/>

<!-- node editor header icons -->
<g transform="translate(318,601)"><circle r="8" stroke="#ddd" stroke-width="1.1"/><path d="M-5-2A6 6 0 0 1 0-5" stroke="#ddd" stroke-width="1.1"/></g><use href="#c" x="335" y="602"/>
<use href="#mo" x="364" y="601"/><use href="#c" x="452" y="602"/>
<path d="M681 601L684 605L690 596" stroke="#fff" stroke-width="2"/>
<use href="#c" x="897" y="602"/>
<use href="#mat" x="929" y="601"/><use href="#c" x="945" y="602"/>
<path d="M1115 594L1122 596V602C1122 606 1118 608 1115 610C1112 608 1108 606 1108 602V596Z" stroke="#bbb" stroke-width="1.1"/>
<use href="#cp" x="1140" y="601"/><path d="M1161 596L1170 606M1170 596L1161 606" stroke="#ddd"/>
<use href="#pin" x="1198" y="601"/>
<path d="M1319 609V594M1315 598L1319 594L1323 598M1319 609H1325" stroke="#666" stroke-width="1.1"/>
<use href="#mg" x="1350" y="600"/>
<path d="M1369 597H1384M1369 605H1384M1372 593V609M1381 593V609" stroke="#ccc" stroke-width="1.1"/><rect x="1373" y="594" width="5" height="5" fill="#ddd" stroke="none"/>
<use href="#c" x="1393" y="602"/>
<g transform="translate(1421,601)"><circle cx="-2" cy="4" r="5" stroke="#fff" stroke-width="1.2"/><circle cx="2" cy="-2" r="6" fill="#fff" stroke="none"/></g><use href="#c" x="1445" y="602"/>

<!-- breadcrumbs -->
<use href="#cr" x="297" y="643"/>
<use href="#mo" x="325" y="643"/><use href="#cr" x="402" y="643"/>
<use href="#mesh" x="427" y="642"/><use href="#cr" x="505" y="643"/>
<use href="#mat" x="529" y="643"/>
<path d="M1465 639L1461 643L1465 647" stroke="#999" stroke-width="1.1"/>

<!-- node details -->
<path d="M749 676L752.5 680L756 676" stroke="#ccc" stroke-width="1"/>
<path d="M992.5 676L996 680L999.5 676" stroke="#ccc" stroke-width="1"/>
<use href="#c2" x="927" y="724"/><use href="#c2" x="927" y="745"/><use href="#c2" x="927" y="804"/><use href="#c2" x="1086" y="700"/>
<path d="M946 698C964 698 962 719 980 719" stroke="#cfe3cf" stroke-width="1.5"/>
<g stroke="none">
<circle cx="941.5" cy="698" r="3.6" fill="#63c763"/>
<circle cx="740" cy="765" r="3.6" fill="#c7c729"/><circle cx="740" cy="784" r="3.6" fill="#a1a1a1"/><circle cx="740" cy="803" r="3.6" fill="#6363c7"/><circle cx="740" cy="821" r="3.6" fill="#c7c729"/>
<circle cx="740" cy="840" r="3.6" fill="#a1a1a1"/><circle cx="740" cy="859" r="3.6" fill="#a1a1a1"/><circle cx="740" cy="878" r="3.6" fill="#a1a1a1"/><circle cx="740" cy="897" r="3.6" fill="#a1a1a1"/><circle cx="740" cy="915" r="3.6" fill="#a1a1a1"/><circle cx="740" cy="934" r="3.6" fill="#a1a1a1"/><circle cx="740" cy="952" r="3.6" fill="#a1a1a1"/><circle cx="740" cy="970" r="3.6" fill="#a1a1a1"/><circle cx="740" cy="988" r="3.6" fill="#a1a1a1"/>
<circle cx="983" cy="719" r="3.6" fill="#63c763"/><circle cx="983" cy="738" r="3.6" fill="#63c763"/><circle cx="983" cy="757" r="3.6" fill="#6363c7"/>
</g>

<!-- outliner icons -->
<g transform="translate(1500,49)"><path d="M-8-9H-3V-5H-8ZM-6-5V8M-6 0H-1M-6 7H-1" stroke="#ccc" stroke-width="1"/><rect x="-1" y="-2" width="9" height="4" fill="#ddd" stroke="none"/><rect x="-1" y="5" width="9" height="4" fill="#ddd" stroke="none"/></g><use href="#c" x="1512" y="50"/>
<use href="#vl" x="1541" y="49"/><use href="#c" x="1558" y="50"/>
<use href="#se" x="1623" y="50"/>
<path d="M1843 41H1861L1855 50V61L1850 57V50Z" stroke="#ddd" stroke-width="1.1"/><use href="#c" x="1870" y="50"/>
<use href="#nf" x="1897" y="52"/>
<use href="#box" x="1507" y="80"/>
<path d="M1503 102H1511L1507 108Z" fill="#ccc" stroke="none"/>
<use href="#box" x="1532" y="105"/>
<path d="M1529 125L1535 129L1529 133ZM1529 150L1535 154L1529 158ZM1529 175L1535 179L1529 183Z" fill="#ccc" stroke="none"/>
<g transform="translate(1557,130)"><circle cx="-4" cy="-6" r="4" fill="#d08a4a" stroke="none"/><circle cx="4" cy="-6" r="4" fill="#d08a4a" stroke="none"/><path d="M-7 0H4V8H-7ZM5 3L9 1V8Z" fill="#d08a4a" stroke="none"/></g>
<g transform="translate(1663,130)" stroke="#2bb08c" stroke-width="1.1"><circle cx="-3" cy="-5" r="4"/><circle cx="3" cy="-5" r="4"/><path d="M-6 0H4V7H-6ZM4 2L8 0V7L4 5"/></g>
<path d="M1551 148H1565L1558 165Z" fill="#d08a4a" stroke="#d08a4a" stroke-width="3"/><path d="M1555 151H1561L1558 159Z" fill="#6a6a6a" stroke="none"/>
<use href="#meshg" x="1645" y="155"/>
<g transform="translate(1557,179)"><circle cy="-3" r="7" fill="#d08a4a" stroke="none"/><path d="M-3 6H3M-2 9H2" stroke="#d08a4a" stroke-width="2"/><path d="M-2-3V1M2-3V1" stroke="#333"/></g>
<g transform="translate(1636,180)" stroke="#2bb08c" stroke-width="1.2"><circle r="5"/><path d="M0-9V-6M0 9V6M-9 0H-6M9 0H6M-6-6L-4-4M6-6L4-4M-6 6L-4 4M6 6L4 4"/></g>
<rect x="1839" y="97" width="13" height="13" rx="2" fill="#ddd" stroke="none"/><path d="M1842 103L1845 106L1850 100" stroke="#222" stroke-width="2"/>
<use href="#eye" x="1870" y="103"/><use href="#cam" x="1895" y="104"/>
<use href="#eye" x="1870" y="128"/><use href="#cam" x="1895" y="129"/>
<use href="#eye" x="1870" y="153"/><use href="#cam" x="1895" y="154"/>
<use href="#eye" x="1870" y="178"/><use href="#cam" x="1895" y="179"/>

<!-- props header icons -->
<g transform="translate(1495,222)"><rect x="-8" y="-9" width="16" height="7" rx="3.5" fill="#ddd" stroke="none"/><rect x="-8" y="1" width="16" height="7" rx="3.5" fill="#ddd" stroke="none"/><circle cx="4" cy="-5.5" r="2.5" fill="#282828" stroke="none"/><circle cx="-4" cy="4.5" r="2.5" fill="#282828" stroke="none"/></g><use href="#c" x="1512" y="223"/>
<use href="#se" x="1640" y="222"/><use href="#c" x="1897" y="223"/>
<use href="#sc" x="1527" y="259"/><use href="#pin" x="1898" y="259"/>

<!-- nav tabs -->
<g transform="translate(1488,265)"><path d="M-6-9V-2" stroke="#c2c2c2" stroke-width="1.2"/><rect x="-8" y="-2" width="4.6" height="10" rx="1.5" fill="#c2c2c2" stroke="none"/><path d="M2.5-9V-5L5.5-2L8.5-5V-9M5.5-2V8" stroke="#c2c2c2" stroke-width="1.9"/></g>
<g transform="translate(1488,308)"><rect x="-8.5" y="-7" width="17" height="15" fill="#d4d4d4" stroke="none"/><path d="M-5-9H0V-7H-5ZM3-9H6V-7H3Z" fill="#d4d4d4" stroke="none"/><path d="M-6-3H2M-6 0.5H2M-6 4H2" stroke="#333" stroke-width="1.4" stroke-linecap="butt"/><circle cx="5.5" cy="-3" r="1.2" fill="#333" stroke="none"/><circle cx="5.5" cy="3" r="1.2" fill="#333" stroke="none"/></g>
<g transform="translate(1488,344)"><rect x="-8.5" y="-9" width="17" height="6" fill="#a8a8a8" stroke="none"/><rect x="-6" y="-3" width="12" height="11" fill="#8a8a8a" stroke="none"/><path d="M-3.5 7L0 1.5L3.5 7Z" fill="#2a2a2a" stroke="none"/></g>
<use href="#vl" x="1488" y="378"/>
<use href="#sc" x="1488" y="413"/>
<g transform="translate(1488,448)"><circle r="7.5" stroke="#b8626c" stroke-width="1.6"/><circle r="5.5" fill="#b8626c" stroke="none"/><path d="M-3-5L2-3L0 0L-4 1ZM2 3L5 1L3 5Z" fill="#2a2a2a" stroke="none"/></g>
<use href="#box" x="1488" y="493"/>
<g transform="translate(1488,537)"><path d="M-8-3V-7H-4M4-7H8V-3M8 3V7H4M-4 7H-8V3" stroke="#d08a4a" stroke-width="1.1"/><rect x="-5" y="-5" width="10" height="10" fill="#d08a4a" stroke="none"/></g>
<path d="M1496 563L1492 567L1495 571L1499 567C1500 572 1495 575 1492 573L1485 581H1481V577L1488 570C1486 566 1490 562 1496 563Z" fill="#5b8fd6" stroke="#5b8fd6" stroke-width="1"/>
<g transform="translate(1488,607)" stroke="#5b8fd6" stroke-width="1.2"><circle cx="-6" cy="-6" r="2.5" fill="#5b8fd6"/><circle cx="-6" cy="6" r="2" fill="#5b8fd6"/><circle cx="6" cy="6" r="2.5" fill="#5b8fd6"/><path d="M-6-6H8M-6-6V6M-6-6L6 6"/></g>
<g transform="translate(1488,642)"><path d="M4.5-6A7.5 7.5 0 1 0 7 3" stroke="#5b8fd6" stroke-width="1.8"/><circle r="3.2" fill="#5b8fd6" stroke="none"/><circle cx="6" cy="-6" r="2.5" fill="#5b8fd6" stroke="none"/></g>
<g transform="translate(1488,677)"><ellipse rx="8.5" ry="5.5" transform="rotate(-35)" stroke="#5b8fd6" stroke-width="1.8"/><circle cx="-2" cy="2" r="2.2" stroke="#5b8fd6"/></g>
<use href="#meshg" x="1488" y="711"/>
<g transform="translate(1488,746)" stroke="none"><circle r="8" fill="#b8626c"/><path d="M0-8A8 8 0 0 0-8 0H0ZM0 0V8A8 8 0 0 0 8 0Z" fill="#2a2a2a"/></g>
<g transform="translate(1488,791)" stroke="none"><rect x="-8" y="-8" width="16" height="16" fill="#2a2020"/><path d="M-8-8H-4V-4H-8ZM0-8H4V-4H0ZM-4-4H0V0H-4ZM4-4H8V0H4ZM-8 0H-4V4H-8ZM0 0H4V4H0ZM-4 4H0V8H-4ZM4 4H8V8H4Z" fill="#b8626c"/></g>

<!-- props icons -->
<use href="#c" x="1901" y="305"/><use href="#c" x="1901" y="336"/><use href="#c" x="1901" y="367"/>
<path d="M1694 326L1702 343H1686Z" fill="#eee" stroke="none"/><path d="M1694 331V338" stroke="#222" stroke-width="1.6"/>
<use href="#cd" x="1530" y="434"/><use href="#gr" x="1894" y="433"/>
<use href="#cd" x="1547" y="465"/><use href="#li" x="1865" y="466"/>
<path d="M1686 503L1690 507L1696 498" stroke="#fff" stroke-width="2"/>
<use href="#cr" x="1548" y="597"/>
<use href="#cd" x="1547" y="628"/><use href="#li" x="1865" y="629"/>
<path d="M1686 666L1690 670L1696 661" stroke="#fff" stroke-width="2"/>
<use href="#cr" x="1548" y="785"/>
<path d="M1562 786L1566 790L1572 781" stroke="#fff" stroke-width="2"/>
<use href="#cr" x="1548" y="816"/><use href="#cr" x="1548" y="847"/>
<use href="#cr" x="1531" y="880"/><use href="#li" x="1865" y="881"/><use href="#gr" x="1894" y="879"/>
<use href="#cr" x="1531" y="913"/><use href="#gr" x="1894" y="912"/>
<use href="#cr" x="1531" y="946"/><use href="#gr" x="1894" y="945"/>
<use href="#cr" x="1531" y="979"/><use href="#gr" x="1894" y="978"/>

<!-- status icons -->
<g stroke="#a0a0a0" stroke-width="1.2"><rect x="14" y="1007" width="11" height="15" rx="5"/><path d="M19.5 1007V1013"/><rect x="297" y="1007" width="11" height="15" rx="5"/><path d="M302.5 1010V1013"/><rect x="574" y="1007" width="11" height="15" rx="5"/><path d="M574 1014H585M579.5 1007V1014"/></g>

<!-- annotations -->
<path d="M1288 282H1351V343H1382L1319 404L1257 343H1288Z" stroke="#ec1c24" stroke-width="5" stroke-linejoin="miter" stroke-linecap="butt"/>
<rect x="1161.5" y="418.5" width="298" height="156" stroke="#ec1c24" stroke-width="5" stroke-linejoin="miter"/>
<circle cx="1282" cy="521" r="46" fill="#000" stroke="none"/>
<circle cx="1405" cy="521" r="46" fill="#000" stroke="none"/>
</svg>

<!-- Options sits above the camera wireframe -->
<div class="p" style="left:1379px;top:71px;width:80px;height:23px;background:#282828"></div>
<span class="t" style="left:1388px;top:82px">Options</span>
<svg class="o" viewBox="0 0 1920 1027" fill="none" stroke="#d0d0d0" stroke-width="1.2" stroke-linecap="round" stroke-linejoin="round"><path d="M1446.5 81L1450 85L1453.5 81"/></svg>
</body></html>
